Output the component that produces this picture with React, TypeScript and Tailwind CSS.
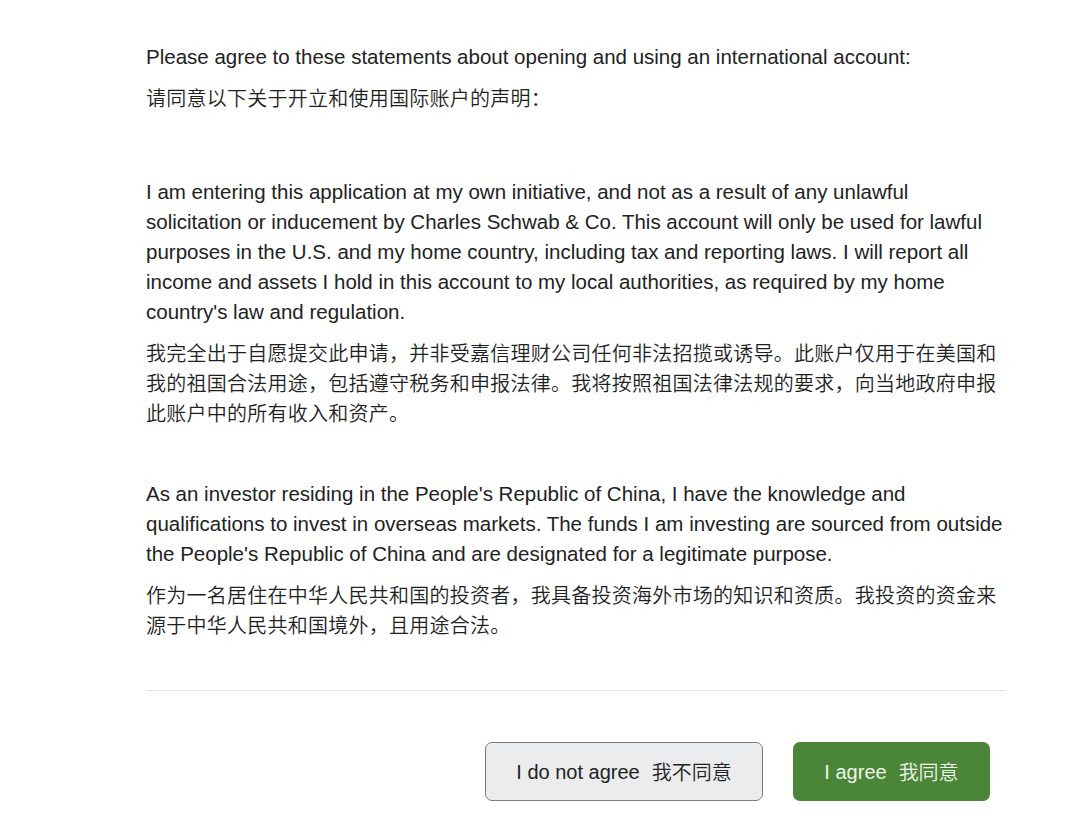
export default function App() {
  const en = "text-[20.5px] leading-[30px] text-[#222222]";
  const zh = "text-[20px] leading-[30px] tracking-[0.25px] font-[350] text-[#1f1f1f]";
  const cjk = { fontFamily: '"Noto Sans CJK SC", sans-serif' };
  return (
    <div
      className="min-h-[826px] w-[1080px] bg-white"
      style={{ fontFamily: '"Liberation Sans", Arial, "Noto Sans CJK SC", sans-serif' }}
    >
      <div className="ml-[146px] w-[860px] pt-[42px]">
        <p className={en}>
          Please agree to these statements about opening and using an international account:
        </p>
        <p className={`${zh} mt-[11px]`} style={cjk}>
          请同意以下关于开立和使用国际账户的声明：
        </p>

        <p className={`${en} mt-[64px]`}>
          I am entering this application at my own initiative, and not as a result of any unlawful
          solicitation or inducement by Charles Schwab &amp; Co. This account will only be used for lawful
          purposes in the U.S. and my home country, including tax and reporting laws. I will report all
          income and assets I hold in this account to my local authorities, as required by my home
          country's law and regulation.
        </p>
        <p className={`${zh} mt-[11px]`} style={cjk}>
          我完全出于自愿提交此申请，并非受嘉信理财公司任何非法招揽或诱导。此账户仅用于在美国和我的祖国合法用途，包括遵守税务和申报法律。我将按照祖国法律法规的要求，向当地政府申报此账户中的所有收入和资产。
        </p>

        <p className={`${en} mt-[51px]`}>
          As an investor residing in the People's Republic of China, I have the knowledge and
          qualifications to invest in overseas markets. The funds I am investing are sourced from outside
          the People's Republic of China and are designated for a legitimate purpose.
        </p>
        <p className={`${zh} mt-[11px]`} style={cjk}>
          作为一名居住在中华人民共和国的投资者，我具备投资海外市场的知识和资质。我投资的资金来源于中华人民共和国境外，且用途合法。
        </p>

        <div className="mt-[50px] h-px w-[860px] bg-[#e3e3e3]" />

        <div className="mt-[51px] flex justify-end gap-[30px] pr-[16px]">
          <button className="flex h-[59px] w-[278px] items-center justify-center rounded-[7px] border-[1.5px] border-[#7c7c7c] bg-[#ebecee] text-[20px] text-[#222222]">
            <span>I do not agree</span>
            <span className="ml-[12px] font-[350]" style={cjk}>我不同意</span>
          </button>
          <button className="flex h-[59px] w-[197px] items-center justify-center rounded-[7px] bg-[#4a8538] text-[20px] text-[#eef5ea]">
            <span>I agree</span>
            <span className="ml-[12px] font-[350]" style={cjk}>我同意</span>
          </button>
        </div>
      </div>
    </div>
  );
}
